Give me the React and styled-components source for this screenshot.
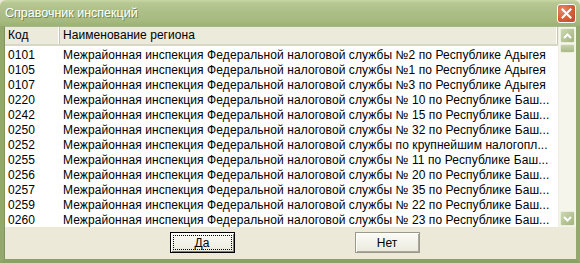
import React from 'react';
import styled, { createGlobalStyle } from 'styled-components';

const GlobalStyle = createGlobalStyle`
  html, body {
    margin: 0;
    padding: 0;
    background: #ffffff;
  }
  body {
    font-family: "Liberation Sans", Arial, sans-serif;
  }
`;

// names as the list control shows them (cut by the column width)
const rows = [
  ['0101', 'Межрайонная инспекция Федеральной налоговой службы №2 по Республике Адыгея'],
  ['0105', 'Межрайонная инспекция Федеральной налоговой службы №1 по Республике Адыгея'],
  ['0107', 'Межрайонная инспекция Федеральной налоговой службы №3 по Республике Адыгея'],
  ['0220', 'Межрайонная инспекция Федеральной налоговой службы № 10 по Республике Баш...'],
  ['0242', 'Межрайонная инспекция Федеральной налоговой службы № 15 по Республике Баш...'],
  ['0250', 'Межрайонная инспекция Федеральной налоговой службы № 32 по Республике Баш...'],
  ['0252', 'Межрайонная инспекция Федеральной налоговой службы по крупнейшим налогопл...'],
  ['0255', 'Межрайонная инспекция Федеральной налоговой службы № 11 по Республике Баш...'],
  ['0256', 'Межрайонная инспекция Федеральной налоговой службы № 20 по Республике Баш...'],
  ['0257', 'Межрайонная инспекция Федеральной налоговой службы № 35 по Республике Баш...'],
  ['0259', 'Межрайонная инспекция Федеральной налоговой службы № 22 по Республике Баш...'],
  ['0260', 'Межрайонная инспекция Федеральной налоговой службы № 23 по Республике Баш...'],
];

const App = () => {
  return (
    <>
      <GlobalStyle />
      <Window>
        <TitleBar>
          <Title>Справочник инспекций</Title>
          <CloseButton>
            <svg width="11" height="11" viewBox="0 0 11 11">
              <path d="M1.5 1.5 L9.5 9.5 M9.5 1.5 L1.5 9.5" stroke="#fff" strokeWidth="2" strokeLinecap="square" />
            </svg>
          </CloseButton>
        </TitleBar>
        <Frame>
          <ListBox>
            <ListArea>
              <Header>
                <HeaderCell $width={51}>Код</HeaderCell>
                <HeaderCell $grow>Наименование региона</HeaderCell>
              </Header>
              {rows.map(([code, name]) => (
                <Row key={code}>
                  <CodeCell>{code}</CodeCell>
                  <NameCell>{name}</NameCell>
                </Row>
              ))}
            </ListArea>
            <ScrollBar>
              <ScrollButton>
                <svg width="9" height="6" viewBox="0 0 9 6">
                  <path d="M1 5 L4.5 1.5 L8 5" stroke="#fff" strokeWidth="2" fill="none" />
                </svg>
              </ScrollButton>
              <Thumb />
              <Track />
              <ScrollButton>
                <svg width="9" height="6" viewBox="0 0 9 6">
                  <path d="M1 1 L4.5 4.5 L8 1" stroke="#fff" strokeWidth="2" fill="none" />
                </svg>
              </ScrollButton>
            </ScrollBar>
          </ListBox>
          <ButtonRow>
            <Button $default>
              <FocusRing>Да</FocusRing>
            </Button>
            <Button>
              <FocusRing $hidden>Нет</FocusRing>
            </Button>
          </ButtonRow>
        </Frame>
      </Window>
    </>
  );
};

const Window = styled.div`
  width: 580px;
  height: 263px;
  display: flex;
  flex-direction: column;
  background: #ece9d8;
  overflow: hidden;
`;

const TitleBar = styled.div`
  height: 26px;
  flex: none;
  display: flex;
  align-items: center;
  justify-content: space-between;
  padding: 0 4px 0 5px;
  background: linear-gradient(to bottom, #c8d7a6 0%, #b6c791 12%, #adbf88 45%, #a6ba80 80%, #9cb175 100%);
  border-radius: 6px 6px 0 0;
`;

const Title = styled.div`
  color: #ffffff;
  font-family: "Liberation Sans", Arial, sans-serif;
  font-size: 12.5px;
  text-shadow: 1px 1px 0 #71864f;
`;

const CloseButton = styled.div`
  width: 19px;
  height: 19px;
  box-sizing: border-box;
  border: 1px solid #ffffff;
  border-radius: 3px;
  background: radial-gradient(circle at 30% 30%, #e88a66 0%, #d55c38 55%, #bd4726 100%);
  display: flex;
  align-items: center;
  justify-content: center;
  margin-top: 1px;
`;

const Frame = styled.div`
  flex: 1;
  display: flex;
  flex-direction: column;
  border-left: 4px solid #93a86c;
  border-right: 4px solid #93a86c;
  border-bottom: 4px solid #8aa064;
  box-shadow: inset 1px 0 0 #7f9459;
`;

const ListBox = styled.div`
  height: 200px;
  display: flex;
  background: #ffffff;
  border-top: 1px solid #a5b887;
  border-left: 1px solid #7f9459;
`;

const ListArea = styled.div`
  flex: 1;
  min-width: 0;
  display: flex;
  flex-direction: column;
`;

const Header = styled.div`
  height: 17px;
  display: flex;
  background: #ebeadb;
  border-bottom: 2px solid #d8d6c6;
  margin-bottom: 1px;
`;

const HeaderCell = styled.div`
  width: ${(p) => (p.$width ? `${p.$width}px` : 'auto')};
  flex: ${(p) => (p.$grow ? 1 : 'none')};
  padding-left: 3px;
  font-size: 12px;
  line-height: 17px;
  letter-spacing: 0.05px;
  color: #000;
  border-right: 1px solid #c7c5b2;
  box-shadow: inset -1px 0 0 #ffffff;
`;

const Row = styled.div`
  height: 15px;
  display: flex;
  align-items: center;
  font-size: 12px;
  letter-spacing: 0.08px;
  color: #000;
`;

const CodeCell = styled.div`
  width: 51px;
  flex: none;
  padding-left: 3px;
`;

const NameCell = styled.div`
  flex: 1;
  min-width: 0;
  padding-left: 4px;
  white-space: nowrap;
  overflow: hidden;
`;

const ScrollBar = styled.div`
  width: 17px;
  flex: none;
  display: flex;
  flex-direction: column;
  background: #f6f5ec;
  border-left: 1px solid #eeeddf;
`;

const ScrollButton = styled.div`
  width: 15px;
  height: 15px;
  margin: 1px;
  box-sizing: border-box;
  border: 1px solid #e8eedb;
  border-radius: 2px;
  background: linear-gradient(135deg, #cdd8b3 0%, #b3c293 60%, #a2b480 100%);
  display: flex;
  align-items: center;
  justify-content: center;
`;

const Thumb = styled.div`
  height: 7px;
  margin: 0 1px;
  border-radius: 2px;
  background: linear-gradient(to bottom, #c5d1a8, #a9ba88);
  border: 1px solid #e8eedb;
`;

const Track = styled.div`
  flex: 1;
`;

const ButtonRow = styled.div`
  flex: 1;
  display: flex;
  align-items: center;
  justify-content: center;
  gap: 120px;
  padding-left: 9px;
  padding-bottom: 1px;
`;

const Button = styled.div`
  width: 65px;
  height: 21px;
  box-sizing: border-box;
  border: 1px solid ${(p) => (p.$default ? '#000000' : '#9a9a8c')};
  box-shadow: ${(p) =>
    p.$default
      ? 'inset 1px 1px 0 #ffffff, inset -1px -1px 0 #7f7d6f'
      : 'inset 1px 1px 0 #ffffff, inset -1px -1px 0 #aca899'};
  background: linear-gradient(to bottom, #fbfbf6, #ebe9dc);
  padding: 2px;
  display: flex;
`;

const FocusRing = styled.div`
  flex: 1;
  display: flex;
  align-items: center;
  justify-content: center;
  border: 1px dotted ${(p) => (p.$hidden ? 'transparent' : '#000000')};
  font-size: 12px;
  color: #000;
`;

export default App;
